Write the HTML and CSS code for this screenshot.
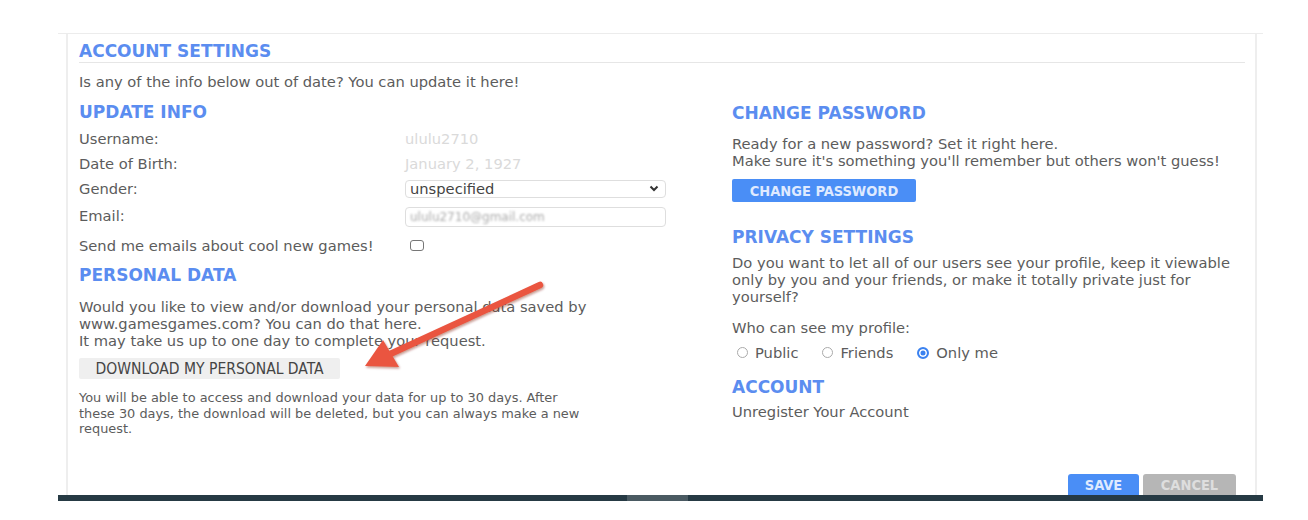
FILE: index.html
```html
<!DOCTYPE html>
<html>
<head>
<meta charset="utf-8">
<link rel="stylesheet" href="styles.css">
</head>
<body>
<div class="frame">
  <div class="panel">
    <h1 class="title">ACCOUNT SETTINGS</h1>
    <p class="intro">Is any of the info below out of date? You can update it here!</p>
    <div class="cols">
      <div class="col-left">
        <h2 class="heading">UPDATE INFO</h2>
        <div class="row r1"><span class="label">Username:</span><span class="value faded">ululu2710</span></div>
        <div class="row r2"><span class="label">Date of Birth:</span><span class="value faded">January 2, 1927</span></div>
        <div class="row r3"><span class="label">Gender:</span>
          <div class="select"><span>unspecified</span>
            <svg class="chev" width="10" height="7" viewBox="0 0 10 7"><path d="M1.5 1.5 L5 5 L8.5 1.5" fill="none" stroke="#333" stroke-width="2"/></svg>
          </div>
        </div>
        <div class="row r4"><span class="label">Email:</span><div class="input"><span class="blur">ululu2710@gmail.com</span></div></div>
        <div class="row r5"><span class="label">Send me emails about cool new games!</span><span class="checkbox"></span></div>

        <h2 class="heading h-personal">PERSONAL DATA</h2>
        <p class="para p-personal">Would you like to view and/or download your personal data saved by<br>www.gamesgames.com? You can do that here.<br>It may take us up to one day to complete your request.</p>
        <button class="btn-download">DOWNLOAD MY PERSONAL DATA</button>
        <p class="small">You will be able to access and download your data for up to 30 days. After<br>these 30 days, the download will be deleted, but you can always make a new<br>request.</p>
      </div>
      <div class="col-right">
        <h2 class="heading h-pass">CHANGE PASSWORD</h2>
        <p class="para p-pass">Ready for a new password? Set it right here.<br>Make sure it's something you'll remember but others won't guess!</p>
        <button class="btn-blue">CHANGE PASSWORD</button>
        <h2 class="heading h-privacy">PRIVACY SETTINGS</h2>
        <p class="para p-privacy">Do you want to let all of our users see your profile, keep it viewable<br>only by you and your friends, or make it totally private just for<br>yourself?</p>
        <p class="para p-who">Who can see my profile:</p>
        <div class="radios">
          <span class="radio"><span class="dot"></span>Public</span>
          <span class="radio"><span class="dot"></span>Friends</span>
          <span class="radio"><span class="dot on"></span>Only me</span>
        </div>
        <h2 class="heading h-account">ACCOUNT</h2>
        <p class="para p-unreg">Unregister Your Account</p>
      </div>
    </div>
    <div class="actions">
      <button class="btn-save">SAVE</button>
      <button class="btn-cancel">CANCEL</button>
    </div>
  </div>
  <div class="bar"><span class="thumb"></span></div>
</div>
<svg class="arrow" width="200" height="100" viewBox="0 0 200 100">
  <defs>
    <filter id="sh" x="-20%" y="-20%" width="140%" height="140%">
      <feDropShadow dx="1" dy="1.5" stdDeviation="1.2" flood-color="#7a1a10" flood-opacity="0.45"/>
    </filter>
  </defs>
  <g filter="url(#sh)">
    <line x1="180" y1="5" x2="28" y2="75" stroke="#ea5540" stroke-width="6.5" stroke-linecap="round"/>
    <polygon points="5,86 23,60 39,87" fill="#ea5540"/>
  </g>
</svg>
</body>
</html>
```
FILE: styles.css
```css
html, body {
  margin: 0;
  padding: 0;
  background: #fff;
}
body {
  font-family: "DejaVu Sans", "Open Sans", sans-serif;
  color: #5c5c5c;
  position: relative;
  height: 520px;
  overflow: hidden;
}
.frame {
  margin: 33px 0 0 58px;
  width: 1205px;
  border-top: 1px solid #ececec;
}
.panel {
  margin: 0 6px 0 8px;
  border-left: 2px solid #eeeeee;
  border-right: 2px solid #eeeeee;
  padding: 8px 10px 0 11px;
  height: 461px;
  box-sizing: border-box;
  position: relative;
}
.title {
  margin: 0;
  font-size: 17px;
  line-height: 19px;
  font-weight: 700;
  color: #5b8df0;
  padding-bottom: 1px;
  border-bottom: 1px solid #e6e6e6;
}
.intro {
  margin: 10px 0 0;
  font-size: 14.7px;
  line-height: 18px;
}
.cols {
  display: grid;
  grid-template-columns: 587px 513px;
  column-gap: 66px;
}
.heading {
  margin: 0;
  font-size: 17px;
  line-height: 20px;
  font-weight: 700;
  color: #5b8df0;
}
.col-left .heading:first-child { margin-top: 11px; }
.row {
  display: flex;
  align-items: center;
  font-size: 14.7px;
}
.label { width: 326px; flex: none; }
.r1 { margin-top: 4px; height: 24px; }
.r2 { height: 26px; }
.r3 { height: 25px; }
.r4 { height: 28px; }
.r5 { height: 32px; }
.faded { color: #dadada; }
.select {
  width: 261px;
  height: 18px;
  box-sizing: border-box;
  border: 1px solid #dedede;
  border-radius: 4px;
  display: flex;
  align-items: center;
  justify-content: space-between;
  padding: 0 6px 0 4px;
  color: #444;
  font-size: 14.7px;
}
.input {
  width: 261px;
  height: 20px;
  box-sizing: border-box;
  border: 1px solid #dedede;
  border-radius: 4px;
  margin-top: 4px;
  padding: 0 4px;
  display: flex;
  align-items: center;
}
.blur { color: #aaa; font-size: 12px; filter: blur(1px); }
.checkbox {
  width: 12px;
  height: 9px;
  border: 1px solid #777;
  border-radius: 3px;
  margin-left: 5px;
}
.h-personal { margin-top: 4px; }
.para {
  margin: 0;
  font-size: 14.7px;
  line-height: 17px;
}
.p-personal { margin-top: 13px; }
.btn-download {
  display: block;
  margin-top: 9px;
  width: 261px;
  height: 21px;
  border: none;
  border-radius: 2px;
  background: #efefef;
  color: #444;
  font-family: "DejaVu Sans Condensed", "DejaVu Sans", sans-serif;
  font-stretch: condensed;
  font-size: 15.5px;
  padding: 0;
}
.small {
  margin: 11px 0 0;
  font-size: 12.9px;
  line-height: 15.5px;
}
.h-pass { margin-top: 12px; }
.p-pass { margin-top: 12px; }
.btn-blue {
  display: block;
  margin-top: 10px;
  width: 184px;
  height: 23px;
  border: none;
  border-radius: 2px;
  background: #4a8ef6;
  color: #dfeaff;
  font-family: "DejaVu Sans Condensed", "DejaVu Sans", sans-serif;
  font-stretch: condensed;
  font-weight: 700;
  font-size: 14.5px;
  padding: 0;
}
.h-privacy { margin-top: 25px; }
.p-privacy { margin-top: 7px; }
.p-who { margin-top: 14px; }
.radios {
  margin-top: 8px;
  display: flex;
  align-items: center;
  font-size: 14.7px;
  line-height: 17px;
  padding-left: 5px;
}
.radio {
  display: flex;
  align-items: center;
  margin-right: 24px;
}
.dot {
  width: 11px;
  height: 11px;
  border-radius: 50%;
  border: 1px solid #aaa;
  box-sizing: border-box;
  margin-right: 7px;
}
.dot.on {
  width: 12px;
  height: 12px;
  border: 2px solid #3b82f0;
  background: #3b82f0;
  box-shadow: inset 0 0 0 1.5px #fff;
}
.h-account { margin-top: 16px; }
.p-unreg { margin-top: 6px; }
.actions {
  position: absolute;
  right: 19px;
  bottom: 0;
  display: flex;
  gap: 4px;
}
.btn-save, .btn-cancel {
  height: 21px;
  border: none;
  border-radius: 3px 3px 0 0;
  font-family: "DejaVu Sans Condensed", "DejaVu Sans", sans-serif;
  font-stretch: condensed;
  font-weight: 700;
  font-size: 14.5px;
  padding: 0;
}
.btn-save { width: 71px; background: #4a8ef6; color: #dfeaff; }
.btn-cancel { width: 93px; background: #b6b6b6; color: #dedede; }
.bar {
  height: 6px;
  background: #263a44;
  position: relative;
}
.thumb {
  position: absolute;
  left: 569px;
  top: 0;
  width: 61px;
  height: 6px;
  background: #4a5a62;
}
.arrow {
  position: absolute;
  left: 360px;
  top: 280px;
}
```
